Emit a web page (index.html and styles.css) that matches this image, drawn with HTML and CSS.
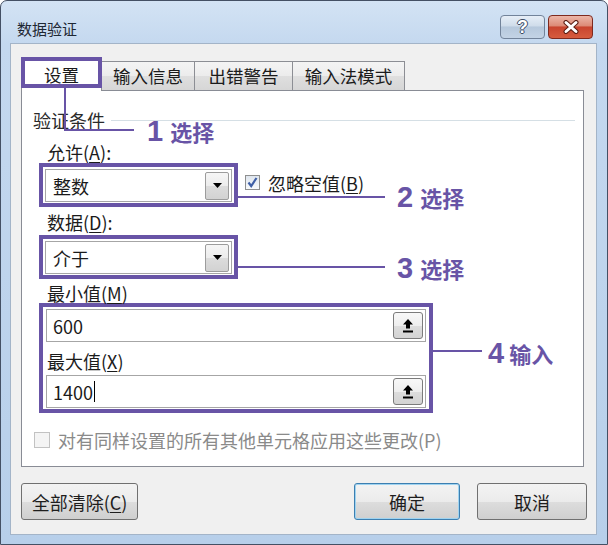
FILE: index.html
```html
<!DOCTYPE html>
<html lang="zh-CN">
<head>
<meta charset="utf-8">
<title>数据验证</title>
<link rel="stylesheet" href="styles.css">
</head>
<body>
<div class="window">
  <div class="titlebar">
    <span class="title">数据验证</span>
    <div class="caps">
      <div class="cap help"><span>?</span></div>
      <div class="cap close">
        <svg width="20" height="14" viewBox="0 0 20 14">
          <path d="M5 2.5 L15 11.5 M15 2.5 L5 11.5" stroke="#5a1c12" stroke-width="5" stroke-linecap="round"/>
          <path d="M5 2.5 L15 11.5 M15 2.5 L5 11.5" stroke="#ffffff" stroke-width="3" stroke-linecap="round"/>
        </svg>
      </div>
    </div>
  </div>
  <div class="client">
    <div class="tabs">
      <div class="tab active">设置</div>
      <div class="tab t2">输入信息</div>
      <div class="tab t3">出错警告</div>
      <div class="tab t4">输入法模式</div>
    </div>
    <div class="panel">
      <div class="group-title"><span>验证条件</span><i class="group-line"></i></div>
      <div class="label first">允许(<u>A</u>):</div>
      <div class="row">
        <div class="hl hl-combo">
          <div class="combo"><span>整数</span>
            <div class="drop"><svg width="9" height="5" viewBox="0 0 9 5"><path d="M0 0 H9 L4.5 5 Z" fill="#000"/></svg></div>
          </div>
        </div>
        <div class="check">
          <span class="cbox"><svg width="13" height="13" viewBox="0 0 13 13"><path d="M2.5 6.5 L5.2 10 L10.5 2" fill="none" stroke="#3f5fa6" stroke-width="2.2"/></svg></span>
          <span>忽略空值(<u>B</u>)</span>
        </div>
      </div>
      <div class="label l2">数据(<u>D</u>):</div>
      <div class="hl hl-combo hl2">
        <div class="combo"><span>介于</span>
          <div class="drop"><svg width="9" height="5" viewBox="0 0 9 5"><path d="M0 0 H9 L4.5 5 Z" fill="#000"/></svg></div>
        </div>
      </div>
      <div class="label l3">最小值(<u>M</u>)</div>
      <div class="hl hl-range">
        <div class="edit"><span>600</span>
          <div class="ref"><svg width="12" height="15" viewBox="0 0 12 15"><path d="M6 1 L11 6.5 H8 V10.5 H4 V6.5 H1 Z" fill="#000"/><rect x="1" y="12.5" width="10" height="2" fill="#000"/></svg></div>
        </div>
        <div class="label inner">最大值(<u>X</u>)</div>
        <div class="edit e2"><span>1400</span><i class="caret"></i>
          <div class="ref"><svg width="12" height="15" viewBox="0 0 12 15"><path d="M6 1 L11 6.5 H8 V10.5 H4 V6.5 H1 Z" fill="#000"/><rect x="1" y="12.5" width="10" height="2" fill="#000"/></svg></div>
        </div>
      </div>
      <div class="apply-all"><span class="cbox disabled"></span><span>对有同样设置的所有其他单元格应用这些更改(P)</span></div>
    </div>
    <div class="buttons">
      <div class="btn clear">全部清除(<u>C</u>)</div>
      <div class="btn ok">确定</div>
      <div class="btn cancel">取消</div>
    </div>
  </div>
  <div class="callouts">
    <div class="tab-hl"></div>
    <i class="ln l1v"></i><i class="ln l1h"></i>
    <i class="ln l2h"></i>
    <i class="ln l3h"></i>
    <i class="ln l4h"></i>
    <div class="co c1"><span class="num">1</span><span class="cjk">选择</span></div>
    <div class="co c2"><span class="num">2</span><span class="cjk">选择</span></div>
    <div class="co c3"><span class="num">3</span><span class="cjk">选择</span></div>
    <div class="co c4"><span class="num">4</span><span class="cjk">输入</span></div>
  </div>
</div>
</body>
</html>
```
FILE: styles.css
```css
* { box-sizing: border-box; }
html, body { margin: 0; padding: 0; }
body {
  width: 608px;
  height: 545px;
  overflow: hidden;
  background: #ffffff;
  font-family: "Noto Sans CJK SC", "Noto Sans", sans-serif;
  font-size: 18px;
  color: #1b1b1b;
}
u { text-decoration-thickness: 1px; text-underline-offset: 2px; }

.window {
  position: relative;
  width: 608px;
  height: 545px;
  border: 1px solid #445064;
  border-radius: 7px 7px 0 0;
  background: linear-gradient(#d3e3f4, #c4d8ef 44px, #b7cfea);
  display: flex;
  flex-direction: column;
  padding: 0 10px 9px 9px;
}

.titlebar {
  height: 42px;
  display: flex;
  align-items: flex-start;
}
.title {
  font-size: 15px;
  line-height: 20px;
  margin: 18px 0 0 7px;
  color: #1e2733;
}
.caps {
  margin: 14px 4px 0 auto;
  display: flex;
  gap: 3px;
}
.cap {
  width: 45px;
  height: 24px;
  border-radius: 4px;
  display: flex;
  align-items: center;
  justify-content: center;
}
.help {
  border: 1px solid #72839a;
  background: linear-gradient(#e6eef7, #cfdcea 45%, #b6c8dc 50%, #c3d3e5);
}
.help span {
  font-family: "Liberation Sans", sans-serif;
  font-weight: bold;
  font-size: 18px;
  line-height: 20px;
  color: #ffffff;
  text-shadow: 1px 0 0 #3a4a63, -1px 0 0 #3a4a63, 0 1px 0 #3a4a63, 0 -1px 0 #3a4a63;
}
.close {
  border: 1px solid #7e2a1f;
  background: linear-gradient(#ecb7a9, #dc8a76 45%, #c8442e 50%, #d65c3f);
}

.client {
  flex: 1;
  background: #f0f0f0;
  border: 1px solid #a3b4c8;
  padding: 13px 12px 0 10px;
  display: flex;
  flex-direction: column;
}

.tabs {
  display: flex;
  align-items: flex-end;
  height: 33px;
  position: relative;
  z-index: 1;
}
.tab {
  height: 29px;
  border: 1px solid #8c8e94;
  border-bottom: none;
  margin-left: -1px;
  background: linear-gradient(#f4f4f4, #ececec 50%, #dfdfdf 50%, #d6d6d6);
  display: flex;
  align-items: center;
  justify-content: center;
  line-height: 20px;
  font-size: 17.5px;
}
.tab.active {
  margin-left: 0;
  width: 81px;
  height: 34px;
  margin-bottom: -1px;
  background: #ffffff;
  padding-top: 1px;
}
.t2 { width: 94px; }
.t3 { width: 99px; }
.t4 { width: 113px; }

.panel {
  height: 377px;
  background: #ffffff;
  border: 1px solid #898c95;
  padding: 19px 8px 0 0;
}
.group-title {
  display: flex;
  align-items: center;
  height: 20px;
  line-height: 20px;
  padding-left: 11px;
  color: #2a2a2a;
}
.group-line {
  flex: 1;
  height: 1px;
  background: #d5dfe5;
  margin-left: 6px;
}
.label {
  line-height: 20px;
  height: 20px;
  margin-left: 25px;
}
.label.first { margin-top: 12px; }
.label.l2 { margin-top: 5px; }
.label.l3 { margin-top: 4px; }
.label.inner { margin: 9px 0 0 1px; }

.row {
  display: flex;
  align-items: center;
  margin-top: 1px;
}
.hl {
  border: 4px solid #6854a6;
  margin-left: 17px;
}
.hl-combo {
  width: 199px;
  height: 44px;
  padding: 2px 2px 1px;
}
.hl2 { margin-top: 3px; }
.combo {
  height: 33px;
  border: 1px solid #a6a6a6;
  background: #ffffff;
  display: flex;
  align-items: center;
  padding: 0 2px 0 7px;
  line-height: 20px;
}
.drop {
  margin-left: auto;
  width: 24px;
  height: 28px;
  border: 1px solid #9c9c9c;
  border-radius: 2px;
  background: linear-gradient(#f6f6f6, #ececec 50%, #dcdcdc 51%, #d2d2d2);
  display: flex;
  align-items: center;
  justify-content: center;
}
.check {
  display: flex;
  align-items: center;
  margin: -5px 0 0 7px;
  gap: 8px;
  line-height: 20px;
}
.cbox {
  width: 15px;
  height: 15px;
  border: 1px solid #8e8f8f;
  background: linear-gradient(#dfe6ee, #f7f9fb);
  display: flex;
  align-items: center;
  justify-content: center;
}
.cbox.disabled {
  width: 16px;
  height: 16px;
  border-color: #c2c2c2;
  background: #f4f4f4;
}

.hl-range {
  width: 394px;
  padding: 2px 3px 1px;
}
.edit {
  height: 33px;
  border: 1px solid #a6a6a6;
  background: #ffffff;
  display: flex;
  align-items: center;
  padding: 0 2px 0 6px;
  line-height: 20px;
}
.e2 { margin-top: 4px; }
.caret {
  width: 1px;
  height: 21px;
  background: #000;
  margin-left: 1px;
}
.ref {
  margin-left: auto;
  width: 30px;
  height: 27px;
  border: 1px solid #7b7b7b;
  border-radius: 3px;
  background: linear-gradient(#f8f8f8, #eeeeee 50%, #dddddd 51%, #d3d3d3);
  display: flex;
  align-items: center;
  justify-content: center;
}

.apply-all {
  display: flex;
  align-items: center;
  gap: 8px;
  height: 20px;
  line-height: 20px;
  margin: 17px 0 0 12px;
  color: #8a8a8a;
}

.buttons {
  display: flex;
  margin: 16px -3px 0 0;
  height: 37px;
}
.btn {
  height: 37px;
  border: 1px solid #707070;
  border-radius: 3px;
  background: linear-gradient(#f3f3f3, #ebebeb 50%, #dddddd 51%, #cfcfcf);
  display: flex;
  align-items: center;
  justify-content: center;
  line-height: 20px;
  color: #1e1e1e;
}
.clear { width: 117px; }
.ok {
  width: 106px;
  margin-left: auto;
  border-color: #3c7fb1;
  box-shadow: inset 0 0 0 1px #9fd3f0;
}
.cancel { width: 110px; margin-left: 17px; }

.callouts {
  position: absolute;
  left: -1px;
  top: -1px;
  width: 608px;
  height: 545px;
  pointer-events: none;
  z-index: 5;
}
.tab-hl {
  position: absolute;
  left: 21px;
  top: 57px;
  width: 81px;
  height: 31px;
  border: 4px solid #6854a6;
}
.ln {
  position: absolute;
  background: #6854a6;
}
.l1v { left: 64px; top: 88px; width: 2px; height: 43px; }
.l1h { left: 64px; top: 129px; width: 70px; height: 2px; }
.l2h { left: 238px; top: 196px; width: 147px; height: 2px; }
.l3h { left: 238px; top: 266px; width: 147px; height: 2px; }
.l4h { left: 433px; top: 350px; width: 49px; height: 2px; }

.co {
  position: absolute;
  display: flex;
  align-items: center;
  height: 30px;
  color: #6854a6;
}
.c1 { left: 147px; top: 116px; }
.c2 { left: 397px; top: 182px; }
.c3 { left: 397px; top: 253px; }
.c4 { left: 488px; top: 338px; }
.num {
  font-family: "Liberation Sans", sans-serif;
  font-weight: bold;
  font-size: 29px;
  line-height: 30px;
}
.cjk {
  font-weight: bold;
  font-size: 22px;
  line-height: 30px;
  margin-left: 7px;
}
.c4 .cjk { margin-left: 5px; }
```
